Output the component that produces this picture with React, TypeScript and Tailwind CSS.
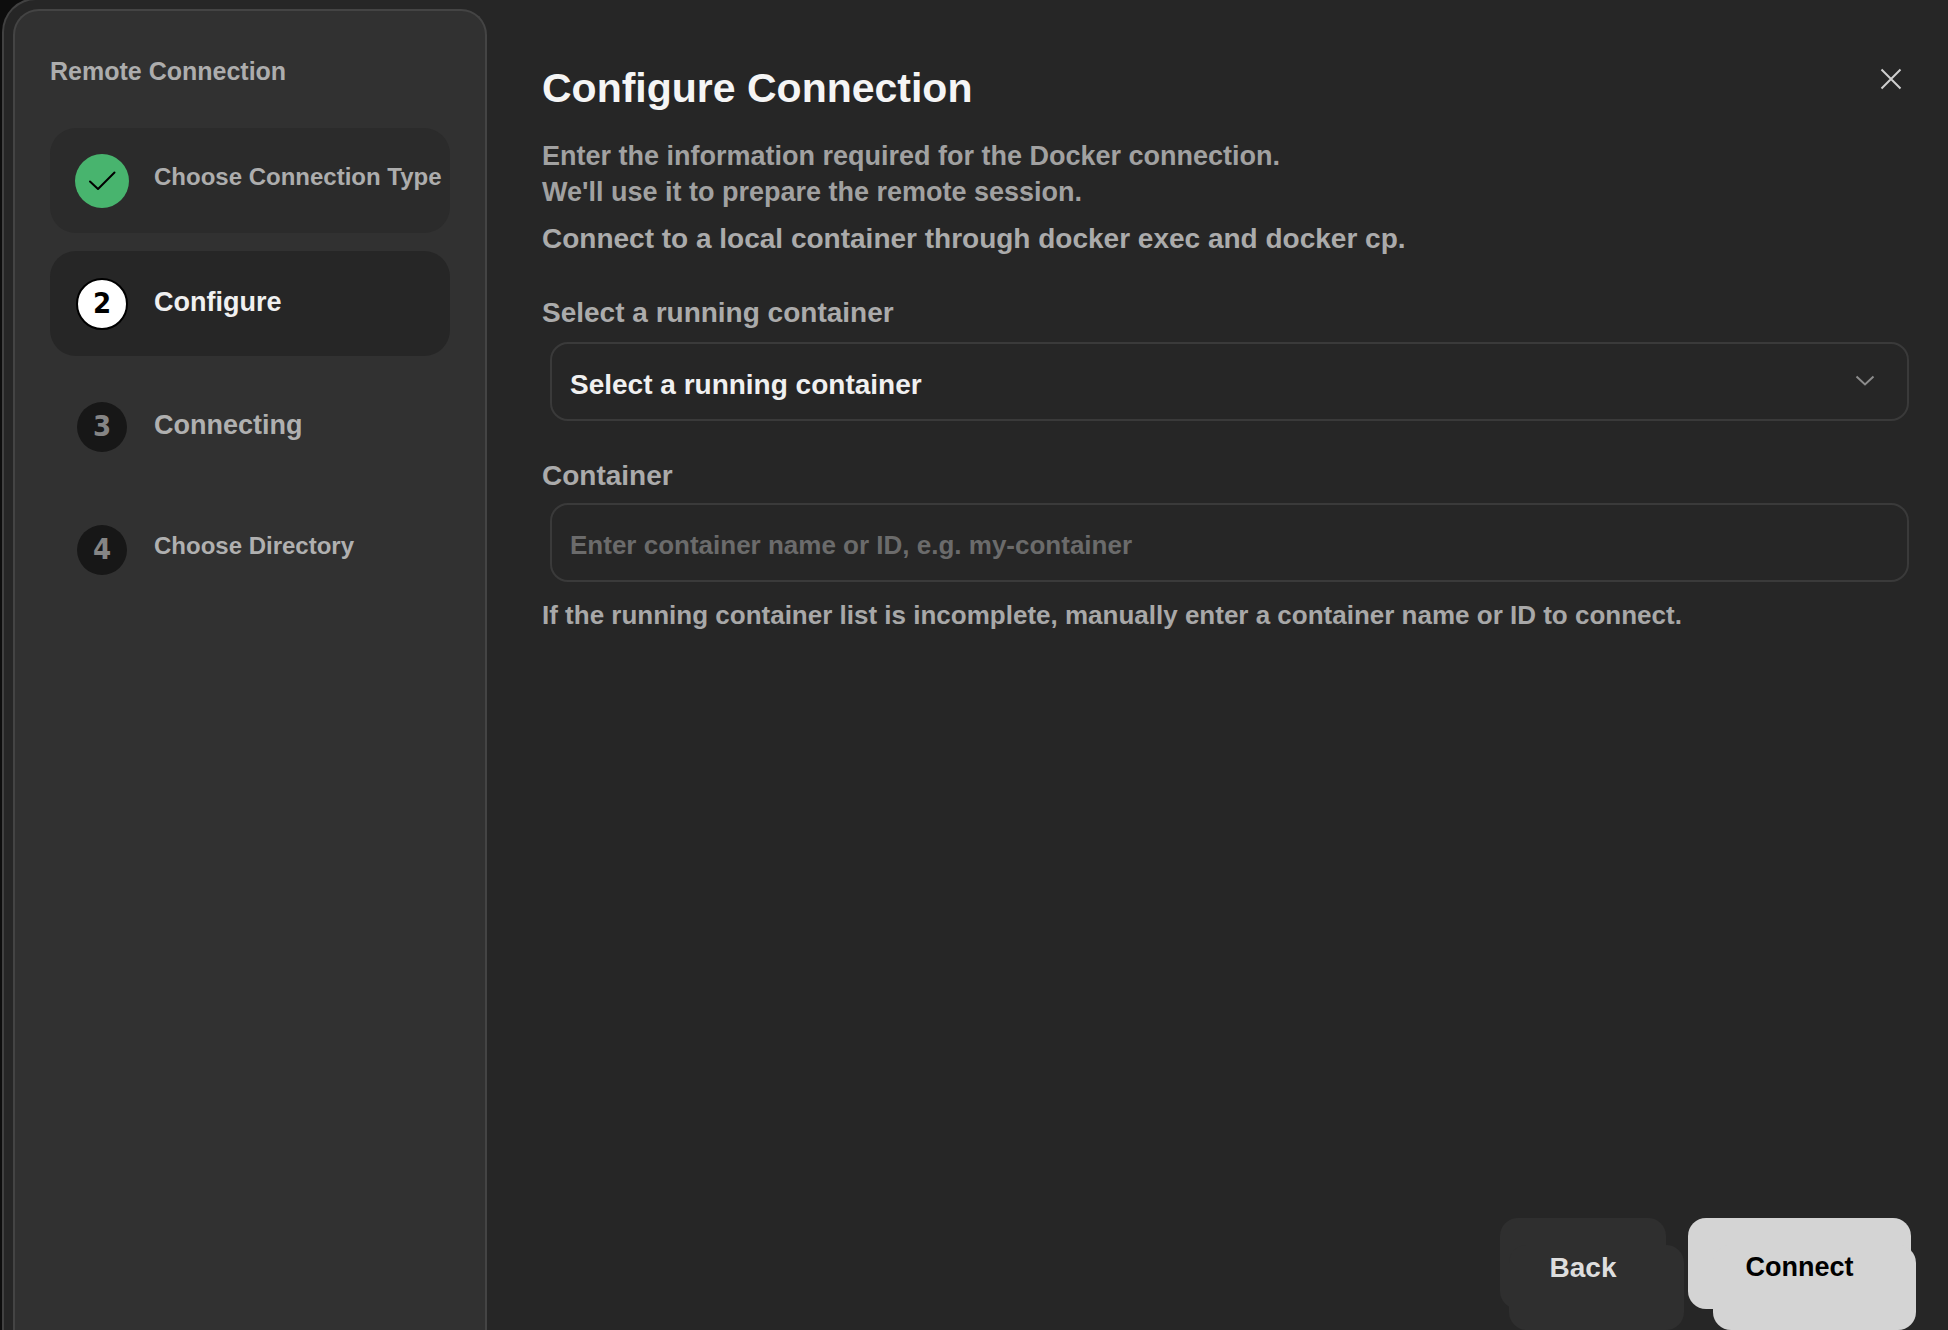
import {
  useState
} from "react";

const steps = [
  { id: 1, label: "Choose Connection Type", small: true },
  { id: 2, label: "Configure", small: false },
  { id: 3, label: "Connecting", small: false },
  { id: 4, label: "Choose Directory", small: true },
];

const rowStyles: any = {
  done: "bg-[#2b2b2b] text-[#adadad]",
  active: "bg-[#262626] text-[#f0f0f0]",
  todo: "text-[#b0b0b0]",
};

const badgeStyles: any = {
  done: "size-[54px] bg-[#48b46e] text-black",
  active: "size-[52px] border-2 border-black bg-white text-black",
  todo: "size-[50px] bg-[#171717] text-[#858585]",
};

export default function App() {

  const [currentStep] = useState(2);

  const [selected,
    setSelected] =
    useState("");

  const [container,
    setContainer] =
    useState("");

  const getState = (id: number) => {

    if (id < currentStep)
      return "done";

    return id === currentStep ? "active" : "todo";
  };

  return (

    <div className="h-screen overflow-hidden bg-[#0d0d0d] pl-0.5 font-['Liberation_Sans',Arial,sans-serif] font-bold">

      <div className="-mt-0.5 flex h-full min-h-full box-content rounded-tl-[34px] border-l-2 border-t-2 border-[#414141] bg-[#262626]">

        {/* SIDEBAR */}
        <aside className="mt-[9px] ml-[9px] w-[474px] shrink-0 rounded-t-[26px] border-2 border-b-0 border-[#444444] bg-[#313131] px-[35px] pt-11">

          <h2 className="text-[25px] leading-8 text-[#adadad]">
            Remote Connection
          </h2>

          <ol className="mt-[41px] flex flex-col gap-[18px]">

            {steps.map((step) => {

              const state = getState(step.id);

              return (
                <li
                  key={step.id}
                  aria-current={state === "active" ? "step" : undefined}
                  className={`flex h-[105px] items-center gap-[25px] rounded-[26px] pl-[25px] whitespace-nowrap ${rowStyles[state]}`}
                >

                  <span className="flex size-[54px] shrink-0 items-center justify-center">
                    <span
                      className={`flex items-center justify-center rounded-full font-['DejaVu_Sans_Condensed','DejaVu_Sans',sans-serif] text-[29px] leading-none ${badgeStyles[state]}`}
                    >
                      {state === "done" ? (
                        <svg
                          width="28"
                          height="20"
                          viewBox="0 0 28 20"
                          fill="none"
                          stroke="currentColor"
                          strokeWidth="2"
                          strokeLinecap="round"
                          strokeLinejoin="round"
                        >
                          <path d="M2 10.5L10 18L26.5 1.5" />
                        </svg>
                      ) : (
                        step.id
                      )}
                    </span>
                  </span>

                  <span
                    className={
                      step.small
                        ? "pb-2 text-[24px] leading-8"
                        : "pb-1 text-[27px] leading-8"
                    }
                  >
                    {step.label}
                  </span>

                </li>
              );
            })}

          </ol>

        </aside>

        {/* CONTENT */}
        <main className="flex min-w-0 flex-1 flex-col pt-16 pr-[37px] pl-[55px]">

          <header className="flex items-start justify-between">

            <h1 className="text-[41px] leading-[48px] text-[#f5f5f5]">
              Configure Connection
            </h1>

            <button
              type="button"
              aria-label="Close"
              className="mr-1 flex h-[30px] w-8 items-center justify-center text-[#cfcfcf]"
            >
              <svg
                width="22"
                height="22"
                viewBox="0 0 22 22"
                fill="none"
                stroke="currentColor"
                strokeWidth="2"
              >
                <path d="M1.5 1.5L20.5 20.5M20.5 1.5L1.5 20.5" />
              </svg>
            </button>

          </header>

          <p className="mt-[26px] text-[27px] leading-9 text-[#a1a1a1]">
            Enter the information required for the Docker connection.
            <br />
            We'll use it to prepare the remote session.
          </p>

          <p className="mt-[11px] text-[28px] leading-9 text-[#ababab]">
            Connect to a local container through docker exec and docker cp.
          </p>

          {/* RUNNING CONTAINER */}
          <label
            htmlFor="running"
            className="mt-[38px] text-[28px] leading-9 text-[#ababab]"
          >
            Select a running container
          </label>

          <div className="relative mt-[11px] mr-0.5 ml-2">

            <select
              id="running"
              value={selected}
              onChange={(e) =>
                setSelected(
                  e.target.value
                )
              }
              className="h-[79px] w-full appearance-none rounded-[18px] border-2 border-[#3a3a3a] bg-transparent pt-1.5 pl-[18px] text-[28px] text-[#f0f0f0]"
            >
              <option value="">Select a running container</option>
            </select>

            <svg
              className="pointer-events-none absolute top-[33px] right-[34px] text-[#8c8c8c]"
              width="20"
              height="12"
              viewBox="0 0 20 12"
              fill="none"
              stroke="currentColor"
              strokeWidth="2"
            >
              <path d="M1.5 1.5L10 9.5L18.5 1.5" />
            </svg>

          </div>

          {/* MANUAL ENTRY */}
          <label
            htmlFor="container"
            className="mt-[37px] text-[28px] leading-9 text-[#ababab]"
          >
            Container
          </label>

          <div className="mt-[9px] mr-0.5 ml-2">

            <input
              id="container"
              type="text"
              value={container}
              onChange={(e) =>
                setContainer(
                  e.target.value
                )
              }
              placeholder="Enter container name or ID, e.g. my-container"
              className="block h-[79px] w-full rounded-[18px] border-2 border-[#3a3a3a] bg-transparent pt-1.5 pl-[18px] text-[26px] text-[#f0f0f0] placeholder:text-[#6b6b6b]"
            />

          </div>

          <p className="mt-[15px] text-[26px] leading-9 text-[#a8a8a8]">
            If the running container list is incomplete, manually enter a container name or ID to connect.
          </p>

          {/* ACTIONS */}
          <footer className="mt-auto mb-[21px] flex justify-end gap-[22px]">

            <button
              type="button"
              className="relative isolate h-[91px] w-[166px] rounded-[18px] bg-[#2f2f2f] pt-2 text-[28px] text-[#dedede] before:absolute before:top-[27px] before:-right-[18px] before:-bottom-[21px] before:left-[9px] before:-z-10 before:rounded-[18px] before:bg-[#2f2f2f]"
            >
              Back
            </button>

            <button
              type="button"
              className="relative isolate h-[91px] w-[223px] rounded-[18px] bg-[#d4d4d4] pt-2 text-[27px] text-black before:absolute before:top-[27px] before:-right-[5px] before:-bottom-[21px] before:left-[25px] before:-z-10 before:rounded-[18px] before:bg-[#d4d4d4]"
            >
              Connect
            </button>

          </footer>

        </main>

      </div>

    </div>
  );
}
